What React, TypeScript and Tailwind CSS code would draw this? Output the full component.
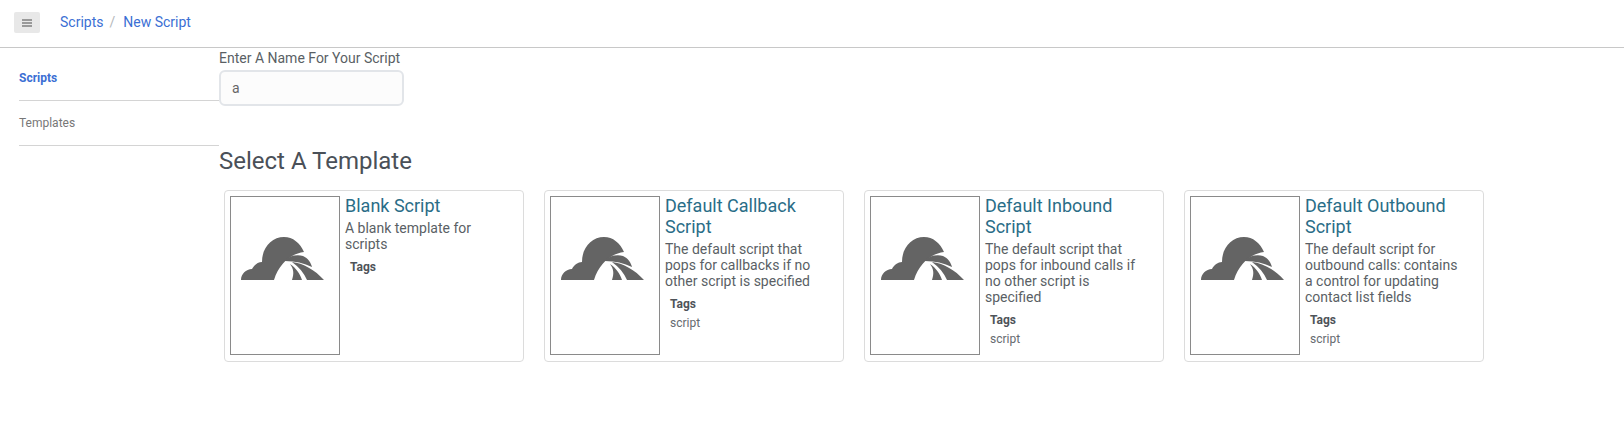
import React from 'react';

interface Template {
  name: string;
  description: string;
  tags: string[];
}

const templates: Template[] = [
  { name: 'Blank Script', description: 'A blank template for scripts', tags: [] },
  {
    name: 'Default Callback Script',
    description: 'The default script that pops for callbacks if no other script is specified',
    tags: ['script'],
  },
  {
    name: 'Default Inbound Script',
    description: 'The default script that pops for inbound calls if no other script is specified',
    tags: ['script'],
  },
  {
    name: 'Default Outbound Script',
    description: 'The default script for outbound calls: contains a control for updating contact list fields',
    tags: ['script'],
  },
];

const Logo: React.FC = () => (
  <svg width="83" height="43" viewBox="0 0 83 43" fill="#646464" className="shrink-0">
    <path d="M0 43 C0 37 5 32 11 32 C13 28 17 25 21 25 C21 10 31 0 43 0 C52 0 59 6 63 15 C49 17 38 27 33 43 Z" />
    <path d="M44 23 C48 19 56 17 62 19 C67 21 70 26 71 30 C63 26 54 24 44 24 Z" />
    <path d="M49 27 C55 31 59 37 61 43 L51 43 C53 37 53 32 49 27 Z" />
    <path d="M51 25 C62 26 74 33 83 43 L66 43 C63 36 58 30 51 25 Z" />
  </svg>
);

const TemplateCard: React.FC<{ template: Template }> = ({ template }) => (
  <div className="w-[300px] h-[172px] mr-[20px] flex border border-[#dcdcdc] rounded-[4px] bg-white p-[5px]">
    <div className="w-[110px] h-[159px] shrink-0 border border-[#8a8a8a] flex justify-start items-start pt-[40px] pl-[10px]">
      <Logo />
    </div>
    <div className="w-[160px] ml-[5px]">
      <div className="text-[18px] leading-[21px] text-[#2a6d87] -mt-[1px]">{template.name}</div>
      <div className="text-[14px] leading-[16px] text-[#5a5f65] mt-[4px]">{template.description}</div>
      <div className="px-[5px] mt-[5px]">
        <div className="text-[12px] leading-[20px] font-bold text-[#4e5359]">Tags</div>
        {template.tags.map((tag) => (
          <div key={tag} className="text-[12px] leading-[18px] text-[#666b70]">{tag}</div>
        ))}
      </div>
    </div>
  </div>
);

export default function App() {
  return (
    <div className="w-[1624px] h-[424px] bg-white overflow-hidden font-['Roboto',sans-serif]">
      {/* Header */}
      <div className="h-[48px] border-b border-[#c8c8c8] flex items-center pb-[2px]">
        <button className="ml-[14px] w-[26px] h-[21px] bg-[#e8e8e8] rounded-[2px] flex flex-col items-center justify-center gap-[1px]">
          <span className="w-[10px] h-[2px] bg-[#999]" />
          <span className="w-[10px] h-[2px] bg-[#999]" />
          <span className="w-[10px] h-[2px] bg-[#999]" />
        </button>
        <div className="ml-[20px] flex text-[14px] text-[#3b6fd4]">
          <span>Scripts</span>
          <span className="text-[#b4b8bc] ml-[6px] mr-[8px]">/</span>
          <span>New Script</span>
        </div>
      </div>

      <div className="flex">
        {/* Sidebar */}
        <div className="w-[200px] ml-[19px] shrink-0 text-[12px]">
          <div className="h-[53px] pt-[22px] leading-[16px] border-b border-[#d4d4d4] font-bold text-[#3b6fd4]">
            Scripts
          </div>
          <div className="h-[45px] pt-[14px] leading-[16px] border-b border-[#d4d4d4] text-[#777]">
            Templates
          </div>
        </div>

        {/* Main */}
        <div className="flex-1">
          <label className="block text-[14px] leading-[20px] text-[#5a5f65]">Enter A Name For Your Script</label>
          <input
            readOnly
            value="a"
            className="block w-[185px] h-[36px] mt-[2px] px-[11px] text-[14px] text-[#666] bg-[#fcfcfc] rounded-[6px] border-2 border-[#e2e5e9] outline-none"
          />
          <h2 className="mt-[41px] text-[24px] leading-[28px] text-[#4a5058]">Select A Template</h2>
          <div className="flex mt-[15px] ml-[5px]">
            {templates.map((t) => (
              <TemplateCard key={t.name} template={t} />
            ))}
          </div>
        </div>
      </div>
    </div>
  );
}
